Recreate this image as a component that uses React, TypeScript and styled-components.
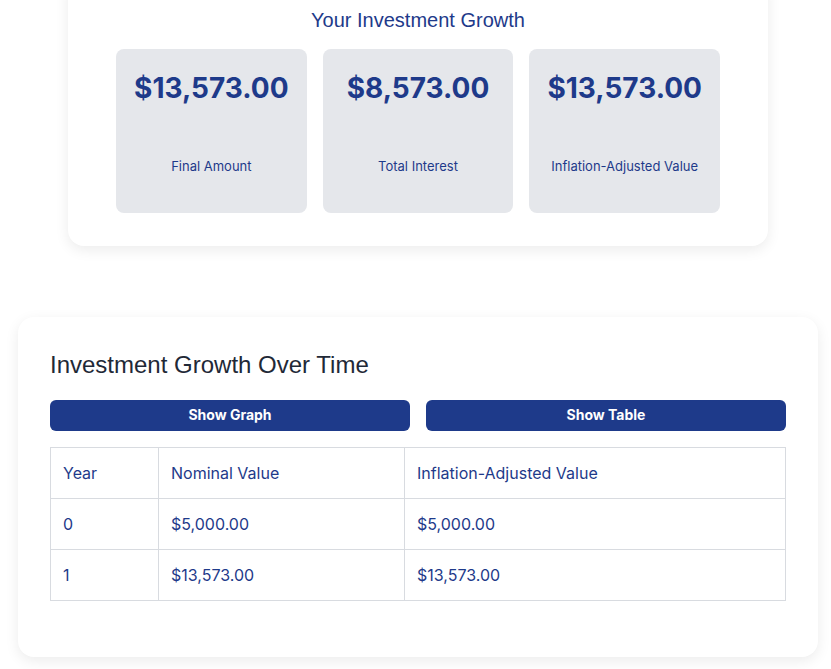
import React from "react";
import styled, { createGlobalStyle } from "styled-components";

const GlobalStyle = createGlobalStyle`
  * { box-sizing: border-box; }
  html, body { margin: 0; padding: 0; background: #ffffff; }
  body { font-family: Inter, "Noto Sans", sans-serif; }
`;

const Page = styled.div`
  display: flex;
  flex-direction: column;
  align-items: center;
  gap: 71px;
  margin-top: -24px;
  padding: 0 0 40px 5px;
`;

const SummaryCard = styled.section`
  width: 700px;
  background: #fff;
  border-radius: 16px;
  box-shadow: 0 4px 14px rgba(0, 0, 0, 0.08);
  padding: 32px 48px 33px;
`;

const SummaryTitle = styled.h2`
  margin: 0 0 17px;
  font-family: "Liberation Sans", Arial, sans-serif;
  font-weight: 400;
  font-size: 20px;
  line-height: 24px;
  color: #1e3a8a;
  text-align: center;
`;

const StatGrid = styled.div`
  display: grid;
  grid-template-columns: repeat(3, 1fr);
  gap: 16px;
`;

const StatBox = styled.div`
  background: #e5e7eb;
  border-radius: 8px;
  padding: 21px 12px 38px;
  display: flex;
  flex-direction: column;
  align-items: center;
  text-align: center;
`;

const StatValue = styled.div`
  font-family: Inter, sans-serif;
  font-weight: 700;
  font-size: 28px;
  line-height: 36px;
  color: #1e3a8a;
`;

const StatLabel = styled.div`
  margin-top: 51px;
  font-family: Inter, sans-serif;
  font-size: 13px;
  line-height: 18px;
  color: #1e3a8a;
`;

const ChartCard = styled.section`
  width: 800px;
  background: #fff;
  border-radius: 16px;
  box-shadow: 0 4px 14px rgba(0, 0, 0, 0.08);
  padding: 32px 32px 56px;
`;

const ChartTitle = styled.h2`
  margin: 0 0 19px;
  font-family: "Liberation Sans", Arial, sans-serif;
  font-weight: 400;
  font-size: 24px;
  line-height: 32px;
  color: #1f2937;
`;

const ButtonRow = styled.div`
  display: grid;
  grid-template-columns: 1fr 1fr;
  gap: 16px;
  margin-bottom: 16px;
`;

const ToggleButton = styled.button`
  border: none;
  border-radius: 6px;
  background: #1e3a8a;
  color: #fff;
  font-family: Inter, sans-serif;
  font-weight: 700;
  font-size: 14px;
  line-height: 17px;
  padding: 6px 16px 8px;
  cursor: pointer;
`;

const Table = styled.table`
  width: 100%;
  border-collapse: collapse;
  font-family: Inter, sans-serif;
  font-size: 16px;
  color: #1e3a8a;
`;

const Th = styled.th<{ $w?: number }>`
  width: ${(p) => (p.$w ? `${p.$w}px` : "auto")};
  text-align: left;
  font-weight: 400;
  padding: 16px 12px;
  line-height: 18px;
  border: 1px solid #d8dbe0;
`;

const Td = styled.td`
  padding: 16px 12px;
  line-height: 18px;
  border: 1px solid #d8dbe0;
`;

const stats = [
  { value: "$13,573.00", label: "Final Amount" },
  { value: "$8,573.00", label: "Total Interest" },
  { value: "$13,573.00", label: "Inflation-Adjusted Value" },
];

const rows = [
  { year: "0", nominal: "$5,000.00", adjusted: "$5,000.00" },
  { year: "1", nominal: "$13,573.00", adjusted: "$13,573.00" },
];

export default function App() {
  return (
    <>
      <GlobalStyle />
      <Page>
        <SummaryCard>
          <SummaryTitle>Your Investment Growth</SummaryTitle>
          <StatGrid>
            {stats.map((s) => (
              <StatBox key={s.label}>
                <StatValue>{s.value}</StatValue>
                <StatLabel>{s.label}</StatLabel>
              </StatBox>
            ))}
          </StatGrid>
        </SummaryCard>
        <ChartCard>
          <ChartTitle>Investment Growth Over Time</ChartTitle>
          <ButtonRow>
            <ToggleButton>Show Graph</ToggleButton>
            <ToggleButton>Show Table</ToggleButton>
          </ButtonRow>
          <Table>
            <thead>
              <tr>
                <Th $w={108}>Year</Th>
                <Th $w={246}>Nominal Value</Th>
                <Th>Inflation-Adjusted Value</Th>
              </tr>
            </thead>
            <tbody>
              {rows.map((r) => (
                <tr key={r.year}>
                  <Td>{r.year}</Td>
                  <Td>{r.nominal}</Td>
                  <Td>{r.adjusted}</Td>
                </tr>
              ))}
            </tbody>
          </Table>
        </ChartCard>
      </Page>
    </>
  );
}
